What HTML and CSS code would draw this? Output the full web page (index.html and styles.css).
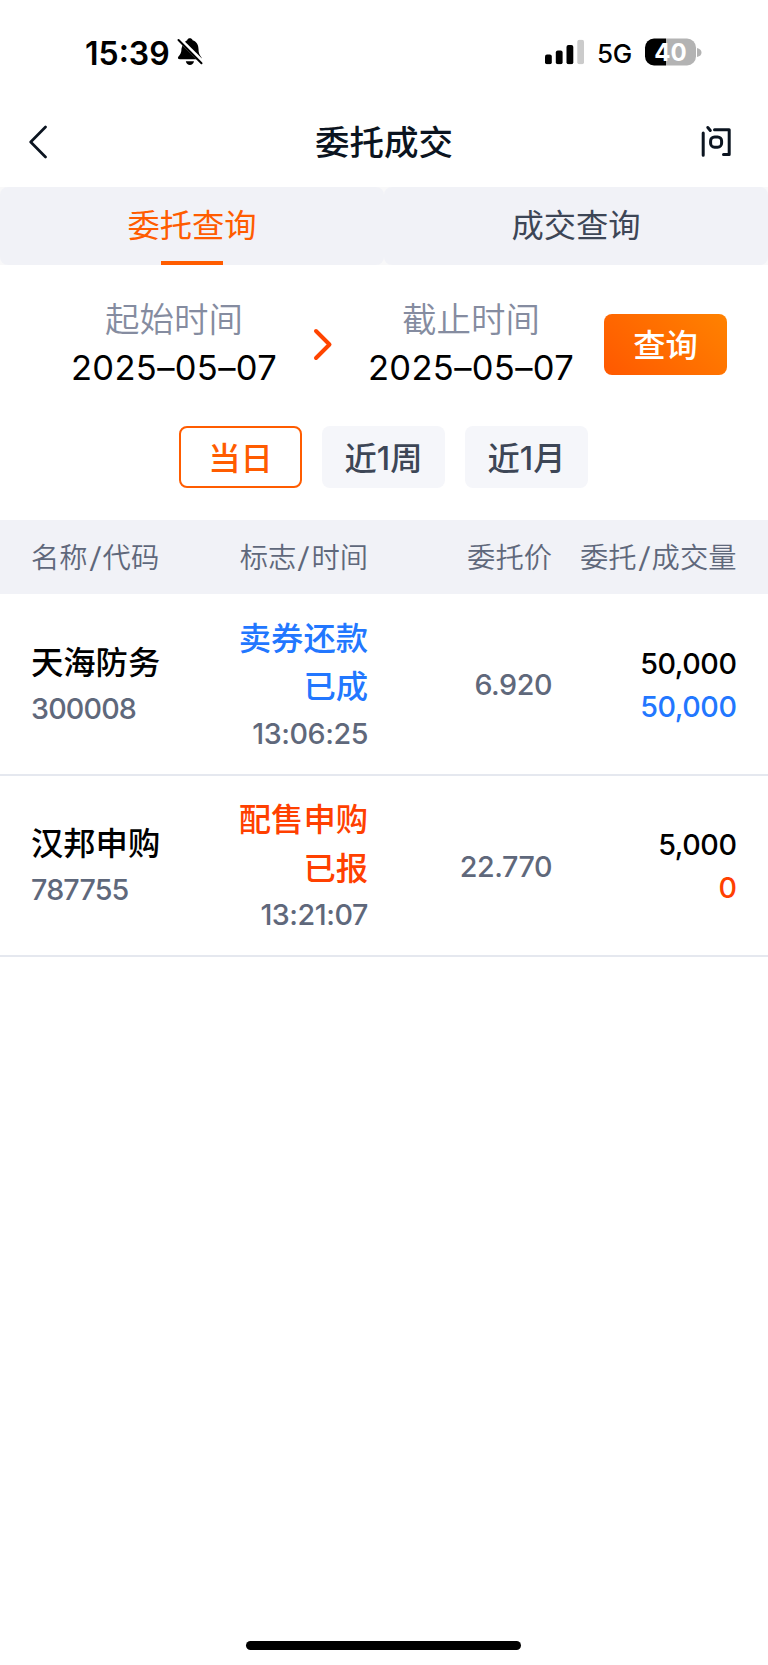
FILE: index.html
```html
<!DOCTYPE html>
<html lang="zh-CN">
<head>
<meta charset="utf-8">
<title>委托成交</title>
<link rel="stylesheet" href="styles.css">
</head>
<body>
<div class="screen">
  <header class="status">
    <div class="status-left">
      <span class="clock">15:39</span>
      <svg class="bell" width="26" height="28" viewBox="0 0 26 28">
        <path d="M7.5 4.2C8.8 3 9.5 2.6 10.2 2.2C10.6 .8 11.6 .3 12.8 .3S15.200 .8 15.600 2.200C19.500 3.600 21.500 6.800 21.500 11C21.500 15 22.500 17 24.300 19.200Q25.500 21 23.500 21.200H3Q0 21 1.300 18.700C3.500 16.500 4.400 14.500 4.500 10.500Q4.600 7.500 7.500 4.200Z"/>
        <path d="M8.800 23.200H17Q16 27 12.900 27T8.800 23.200Z"/>
        <path d="M2.300 1.200L25.500 24.200" stroke="#fff" stroke-width="4.400"/>
        <path d="M1.500 2L24.500 25.200" stroke="#000" stroke-width="2" stroke-linecap="round"/>
      </svg>
    </div>
    <div class="status-right">
      <svg class="signal" width="39" height="25" viewBox="0 0 39 25">
        <rect x="0" y="15" width="6.800" height="9.700" rx="2"/>
        <rect x="10.800" y="11" width="6.800" height="13.700" rx="2"/>
        <rect x="21.500" y="5.500" width="6.800" height="19.200" rx="2"/>
        <rect x="32.300" y="0.300" width="6.700" height="24.400" rx="2" fill="#cbcbcb"/>
      </svg>
      <span class="network">5G</span>
      <span class="battery">40</span>
      <svg class="nub" width="5" height="9" viewBox="0 0 5 9"><path d="M0 0Q4.500 1 4.500 4.500T0 9Z" fill="#b3b3b3"/></svg>
    </div>
  </header>
  <nav class="nav">
    <svg width="20" height="34" viewBox="0 0 20 34" fill="none" stroke="#0b1420" stroke-width="2.700" stroke-linecap="round" stroke-linejoin="round"><path d="M16.500 2L1.700 17L16.500 32"/></svg>
    <h1 class="title">委托成交</h1>
    <svg class="ask" width="32" height="34" viewBox="0 0 32 34" fill="none" stroke="#0b1420" stroke-width="3" stroke-linecap="round" stroke-linejoin="round"><path d="M2.200 8V30.200M6.800 2.500L9.300 5.500M13.500 4.800H28.200V29.500H22.500"/><rect x="9.600" y="12" width="11" height="10.200" rx="4"/></svg>
  </nav>
  <div class="tabs">
    <div class="tab tab-active"><span>委托查询</span></div>
    <div class="tab"><span>成交查询</span></div>
  </div>
  <section class="filter">
    <div class="date"><span class="date-label">起始时间</span><span class="date-value">2025–05–07</span></div>
    <svg class="arrow" width="20" height="33" viewBox="0 0 20 33" fill="none" stroke="#ff4400" stroke-width="4" stroke-linecap="round" stroke-linejoin="round"><path d="M3 3L16.500 16.500L3 30"/></svg>
    <div class="date"><span class="date-label">截止时间</span><span class="date-value">2025–05–07</span></div>
    <button class="query">查询</button>
  </section>
  <div class="ranges">
    <button class="range range-active">当日</button>
    <button class="range">近1周</button>
    <button class="range">近1月</button>
  </div>
  <div class="row head">
    <span>名称<span class="slash">/</span>代码</span><span class="right">标志<span class="slash">/</span>时间</span><span class="right">委托价</span><span class="right">委托<span class="slash">/</span>成交量</span>
  </div>
  <div class="row order">
    <div class="stack"><span class="name">天海防务</span><span class="num code">300008</span></div>
    <div class="stack right sell"><span class="flag">卖券还款</span><span class="flag">已成</span><span class="num">13:06:25</span></div>
    <span class="num right">6.920</span>
    <div class="stack right"><span class="num total">50,000</span><span class="num blue">50,000</span></div>
  </div>
  <div class="row order">
    <div class="stack"><span class="name">汉邦申购</span><span class="num code">787755</span></div>
    <div class="stack right buy"><span class="flag">配售申购</span><span class="flag">已报</span><span class="num">13:21:07</span></div>
    <span class="num right">22.770</span>
    <div class="stack right"><span class="num total">5,000</span><span class="num red">0</span></div>
  </div>
  <div class="home"></div>
</div>
</body>
</html>
```
FILE: styles.css
```css
* { box-sizing: border-box; }
body { margin: 0; background: #fff; }
.screen {
  width: 768px; height: 1665px; display: flex; flex-direction: column;
  font-family: Inter, "Noto Sans CJK SC", sans-serif; color: #000; background: #fff;
  white-space: nowrap; overflow: hidden;
}
.status { height: 104px; padding: 0 66px 0 85px; display: flex; justify-content: space-between; align-items: center; }
.status-left, .status-right { display: flex; align-items: center; }
.clock { font-size: 32px; font-weight: 600; line-height: 40px; padding-top: 3px; }
.bell { margin-left: 7px; }
.network { font-size: 26px; font-weight: 450; line-height: 32px; margin: 3px 13px 0 13px; letter-spacing: -0.3px; }
.battery {
  width: 51px; height: 27px; border-radius: 9px; display: flex; justify-content: center; align-items: center;
  background: linear-gradient(90deg, #000 0 21px, #b3b3b3 21px); color: #fff; font-size: 24px; font-weight: 650; line-height: 27px;
}
.battery, .signal { transform: translateY(-0.5px); }
.nub { margin-left: 1px; }
.nav { height: 83px; padding: 0 35px 7px 29px; display: grid; grid-template-columns: 100px 1fr 94px; align-items: center; }
.ask { justify-self: end; }
.title { margin: 0; padding-top: 2px; font-size: 34.500px; font-weight: 500; line-height: 50px; color: #0b1420; text-align: center; }
.tabs { height: 78px; display: flex; flex-shrink: 0; background: #f8f8f9; }
.tab { flex: 1; display: flex; justify-content: center; background: #f1f2f7; border-radius: 8px; font-size: 32.300px; line-height: 78px; color: #3d4656; }
.tab-active { position: relative; color: #ff5c00; }
.tab-active::after { content: ""; position: absolute; left: 161px; bottom: 0; width: 62px; height: 4px; background: #ff5c00; }
.filter { height: 161px; padding: 30px 41px 0 72px; display: flex; align-items: flex-start; }
.date { width: 204px; display: flex; flex-direction: column; align-items: center; }
.date-label { font-size: 34.500px; line-height: 49px; color: #858ca0; font-weight: 350; }
.date-value { font-size: 34.500px; line-height: 48px; letter-spacing: 0.350px; }
.arrow { margin: 33px 36px 0 37px; }
.query {
  width: 123px; height: 61px; margin: 19px 0 0 auto; padding: 0 0 4px; border: 0; border-radius: 8px;
  background: linear-gradient(45deg, #ff5800, #ff8200); color: #fff; font: 500 32.300px "Noto Sans CJK SC", sans-serif;
}
.ranges { height: 94px; padding-left: 179px; display: flex; gap: 20px; align-items: flex-start; }
.range {
  width: 123px; height: 62px; padding: 0 0 3px; border: 0; border-radius: 8px; background: #f5f6fa; color: #3d4656;
  font: 500 32.300px Inter, "Noto Sans CJK SC", sans-serif;
}
.range-active { border: 2px solid #ff5c00; background: #fff; color: #ff5c00; }
.row { display: grid; grid-template-columns: 162px 175px 184px 184.500px; padding: 0 31px; align-items: center; }
.head { height: 74px; background: #f1f2f7; font-size: 28.300px; line-height: 76px; color: #5f687b; font-weight: 350; }
.slash { display: inline-block; width: 15px; text-align: center; transform: scaleX(1.35); }
.right { text-align: right; justify-self: end; }
.order { height: 181.500px; padding-top: 2px; border-bottom: 2px solid #e5e8ef; }
.stack { display: flex; flex-direction: column; }
.name { font-size: 32.300px; font-weight: 500; line-height: 46px; }
.flag { font-size: 32.300px; font-weight: 500; line-height: 48.500px; }
.num { font-size: 28.700px; line-height: 43px; letter-spacing: -0.450px; font-weight: 450; color: #5f687b; }
.code { letter-spacing: -0.850px; padding-top: 1px; }
.sell .flag, .blue { color: #2277ff; }
.buy .flag, .red { color: #ff4000; }
.total { color: #000; }
.home { width: 275px; height: 9px; margin: auto auto 15px 246px; border-radius: 5px; background: #000; }
```
